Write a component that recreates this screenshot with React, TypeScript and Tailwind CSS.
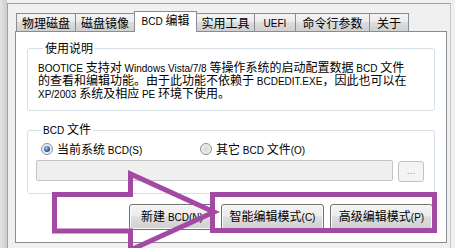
import React from "react";

// Latin runs use a narrower, smaller face than the CJK text
function L({ children }: { children: React.ReactNode }) {
  return <span className="font-['Liberation_Sans',sans-serif] text-[10px]">{children}</span>;
}

const tabs: { label: React.ReactNode; w: string; active?: boolean }[] = [
  { label: "物理磁盘", w: "w-[60px]" },
  { label: "磁盘镜像", w: "w-[60px]" },
  { label: <><L>BCD </L>编辑</>, w: "w-[63px]", active: true },
  { label: "实用工具", w: "w-[59px]" },
  { label: <L>UEFI</L>, w: "w-[42px]" },
  { label: "命令行参数", w: "w-[75px]" },
  { label: "关于", w: "w-[40px]" },
];

function Radio({ checked }: { checked?: boolean }) {
  return (
    <span className="flex h-[12px] w-[12px] shrink-0 items-center justify-center rounded-full border border-[#8e8f8f] bg-[radial-gradient(circle,#d4d4d4,#f4f4f4_80%)]">
      {checked && (
        <span className="h-[6px] w-[6px] rounded-full bg-[radial-gradient(circle_at_40%_35%,#a8cdf5,#2a5fae_55%,#0f326f)]" />
      )}
    </span>
  );
}

function Button({ w, children }: { w: string; children: React.ReactNode }) {
  return (
    <button
      className={`${w} flex h-[26px] items-center justify-center rounded-[3px] border border-[#707070] bg-[linear-gradient(#f4f4f4,#ececec_45%,#dedede_50%,#d0d0d0)] text-[12px] leading-[14px] text-black shadow-[inset_0_0_0_1px_#fbfbfb]`}
    >
      <span>{children}</span>
    </button>
  );
}

export default function App() {
  return (
    <div className="relative flex h-[248px] w-[455px] overflow-hidden bg-[#f0f0f0] font-['Noto_Sans_CJK_SC',sans-serif] text-[12px] text-black">
      {/* window edge */}
      <div className="h-full w-[7px] bg-[linear-gradient(90deg,#e4e4e4,#cdcdcd)]" />

      <div className="mt-[3px] w-[444px] border-l border-r border-t border-l-[#a0a0a0] border-r-[#c4c4c4] border-t-[#a0a0a0] pl-[7px] pt-[7px]">
        {/* tab strip */}
        <div className="relative z-10 flex h-[21px] items-end pl-px">
          {tabs.map((t, i) => (
            <div
              key={i}
              className={`${t.w} ${i > 0 ? "-ml-px" : ""} flex items-center justify-center border border-[#898c95] leading-[14px] ${
                t.active
                  ? "h-[21px] border-b-0 bg-white pb-[2px]"
                  : "h-[19px] bg-[linear-gradient(#f3f3f3,#ebebeb_50%,#dcdcdc_50%,#d0d0d0)]"
              }`}
            >
              <span>{t.label}</span>
            </div>
          ))}
        </div>

        {/* tab page */}
        <div className="relative -mt-px h-[212px] w-[432px] border border-[#898c95] bg-white px-[11px] pt-[8px]">
          <fieldset className="rounded-[3px] border border-[#d5dfe5] pb-[11px] pl-[10px]">
            <legend className="ml-[5px] px-[2px] leading-[16px]">使用说明</legend>
            <div className="pt-[4px] leading-[13px]">
              <div className="h-[13px]">
                <L>BOOTICE </L>支持对<L> Windows Vista/7/8 </L>等操作系统的启动配置数据<L> BCD </L>文件
              </div>
              <div className="h-[13px]">
                的查看和编辑功能。由于此功能不依赖于<L> BCDEDIT.EXE</L>，因此也可以在
              </div>
              <div className="h-[13px]">
                <L>XP/2003 </L>系统及相应<L> PE </L>环境下使用。
              </div>
            </div>
          </fieldset>

          <fieldset className="mt-[10px] rounded-[3px] border border-[#d5dfe5] pb-[11px] pl-[8px]">
            <legend className="ml-[5px] px-[2px] leading-[16px]">
              <L>BCD </L>文件
            </legend>
            <div className="mt-[2px] flex h-[16px] items-center pl-[5px]">
              <label className="flex w-[159px] items-center gap-[4px]">
                <Radio checked />
                <span>
                  当前系统<L> BCD(S)</L>
                </span>
              </label>
              <label className="flex items-center gap-[4px]">
                <Radio />
                <span>
                  其它<L> BCD </L>文件<L>(O)</L>
                </span>
              </label>
            </div>
            <div className="mt-[3px] flex items-start gap-[5px]">
              <div className="h-[21px] w-[357px] rounded-[2px] border border-[#c5c5c5] bg-[#efefef]" />
              <button className="mt-px flex h-[21px] w-[26px] items-center justify-center rounded-[3px] border border-[#c2c2c2] bg-[#f4f4f4] pb-[3px] font-['Liberation_Sans',sans-serif] text-[10px] text-[#9a9a9a]">
                ...
              </button>
            </div>
          </fieldset>

          <div className="mt-[10px] flex justify-end gap-[6px] pr-[2px]">
            <Button w="w-[86px]">
              新建<L> BCD(N)</L>
            </Button>
            <Button w="w-[103px]">
              智能编辑模式<L>(C)</L>
            </Button>
            <Button w="w-[103px]">
              高级编辑模式<L>(P)</L>
            </Button>
          </div>
        </div>
      </div>

      {/* purple annotation drawn over the screenshot */}
      <svg className="pointer-events-none absolute inset-0" width="455" height="248" viewBox="0 0 455 248">
        <polygon
          points="54.5,194.5 130.5,194.5 130.5,174 214,212 130.5,250 130.5,231 54.5,231"
          fill="none"
          stroke="#a349a4"
          strokeWidth="5"
        />
        <rect x="212.5" y="194.5" width="222" height="36" fill="none" stroke="#a349a4" strokeWidth="5" />
      </svg>
    </div>
  );
}
